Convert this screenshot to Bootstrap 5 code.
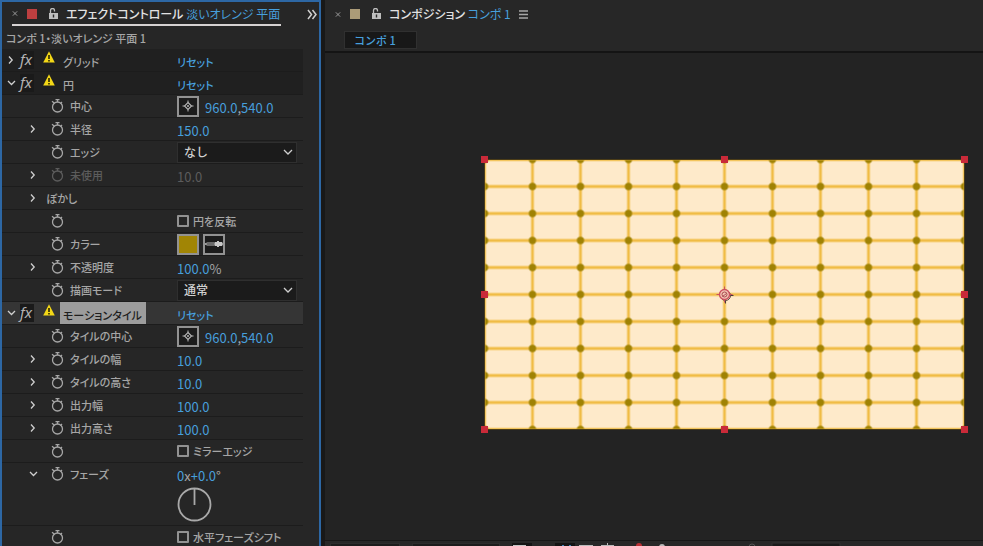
<!DOCTYPE html>
<html lang="ja">
<head>
<meta charset="utf-8">
<meta name="viewport" content="width=device-width, initial-scale=1">
<title>エフェクトコントロール</title>
<link href="https://cdn.jsdelivr.net/npm/bootstrap@5.3.0/dist/css/bootstrap.min.css" rel="stylesheet">
<style>
:root { --ink: #a6a6a6; --blue: #479fdc; --panel: #262626; --edge: #1c1c1c; }
body { background: #181818; color: var(--ink); font-family: "Noto Sans CJK JP", sans-serif; font-size: 12px; line-height: 16px; font-feature-settings: "palt"; }
svg { display: block; flex: none; overflow: visible; }
button, .lnk { background: none; border: 0; padding: 0; color: inherit; line-height: 16px; }
.lnk, .num { color: var(--blue); text-decoration: none; }
.lnk { font-weight: 500; }
.blue { color: var(--blue); }
.fx-panel { width: 321px; flex: none; background: var(--panel); border: 2px solid #2d67a4; border-bottom: 0; }
.strong-title { color: #e2e2e2; font-weight: 500; }
.fx-head { height: 24px; margin: 0 2px 0 10px; }
.fx-tab { border-bottom: 2px solid #d6d2d2; width: 269px; height: 24px; padding-top: 1px; }
.closer { width: 7px; margin-right: 8px; }
.chip { width: 10px; height: 10px; flex: none; }
.chip-red { background: #bd3f40; }
.chip-tan { background: #ab9b78; }
.crumb { height: 23px; padding: 4px 4px 0; font-size: 11px; font-weight: 500; }
.plist { margin-right: 16px; font-size: 11px; }
.prow { height: 23px; border-bottom: 1px solid var(--edge); }
.prow-fx { background: #202020; }
.prow-on { background: #353535; }
.prow-tall { height: 63px; }
.cell-name { width: 175px; flex: none; height: 22px; padding-left: 26px; font-weight: 500; }
.prow-fx .cell-name { padding-left: 4px; }
.twirl { width: 10px; height: 12px; margin-right: 12px; flex: none; color: #cfcfcf; }
.prow-fx .twirl { margin-right: 4px; }
.watch { width: 14px; height: 16px; margin-right: 6px; flex: none; }
.twirl-near { margin-right: 8px; }
.fxmark { width: 14px; margin-right: 9px; padding-bottom: 2px; line-height: 16px; font-family: "Noto Sans", sans-serif; font-style: italic; font-weight: 400; font-size: 15px; color: #b4b4b4; background: #1a1a1a; }
.warn { margin: 0 5px 7px 0; }
.fxname { padding: 3px 3px 0; height: 22px; line-height: 20px; }
.fxname-on { background: #9c9c9c; color: #1e1e1e; padding-right: 4px; }
.cell-val { height: 22px; }
.low { padding-top: 4px; }
.num { font-size: 13px; }
.plain { font-size: 13px; }
.cell-val > label { font-weight: 500; }
.off { color: #5c5c5c; }
.sq { width: 22px; height: 21px; border: 2px solid #929292; background: #1c1c1c; display: flex; align-items: center; justify-content: center; }
.aimer { margin-right: 6px; }
.sq-gold { background: #a18505; }
.pick { position: relative; width: 120px; }
.pick select { appearance: none; width: 100%; height: 21px; background: #1b1b1b; border: 1px solid #2f2f2f; color: #d0d0d0; padding: 0 6px; font-size: 12px; font-weight: 500; line-height: 18px; }
.pick svg { position: absolute; right: 4px; top: 7px; pointer-events: none; color: #cfcfcf; }
.tick { appearance: none; width: 12px; height: 12px; border: 2px solid #929292; border-radius: 1px; margin: 0 4px 0 0; flex: none; }
.tick:checked { background: #929292; }
.comp { margin-left: 4px; background: #232323; min-width: 0; }
.comp-head { height: 28px; padding-left: 10px; background: #272727; }
.comp-tabs { height: 25px; padding: 3px 0 0 19px; background: #272727; border-bottom: 2px solid #141414; }
.comp-tab { width: 73px; height: 18px; background: #181818; border: 1px solid #303030; padding-left: 9px; font-size: 11px; font-weight: 500; }
.stage { padding: 102px 0 0 155px; overflow: hidden; }
.foot { height: 6px; background: #272727; border-top: 1px solid #171717; padding: 2px 0 0 5px; overflow: hidden; gap: 12px; }
.slot { height: 8px; background: #1c1c1c; border: 1px solid #2c2c2c; flex: none; }
.slot-a { width: 70px; } .slot-b { width: 88px; }
</style>
<script src="https://cdn.jsdelivr.net/npm/bootstrap@5.3.0/dist/js/bootstrap.bundle.min.js"></script>
</head>
<body class="vh-100 overflow-hidden">
<svg width="0" height="0" class="position-absolute" aria-hidden="true">
  <defs>
    <symbol id="right" viewBox="0 0 10 12"><path d="M3 2.500 6.200 6 3 9.500" fill="none" stroke="currentColor" stroke-width="1.300"/></symbol>
    <symbol id="down" viewBox="0 0 10 12"><path d="M2 4 5.500 7.500 9 4" fill="none" stroke="currentColor" stroke-width="1.300"/></symbol>
    <symbol id="watch" viewBox="0 0 14 16"><g fill="none" stroke="currentColor" stroke-width="1.300"><circle cx="7.500" cy="9" r="5"/><path d="M5.500 1.600h4M7.500 1.600V4M2 3.200 4.500 5.300M10.500 5.500 12 4"/></g></symbol>
    <symbol id="lock" viewBox="0 0 9 12"><path d="M0 5h9v6H0zM3.800 6.500v3h1.400v-3z" fill="#bdbdbd" fill-rule="evenodd"/><path d="M1.500 5V2.500a2 2 0 0 1 4 0v1" fill="none" stroke="#bdbdbd" stroke-width="1.300"/></symbol>
    <symbol id="cross" viewBox="0 0 7 7"><path d="M1 1 6 6M6 1 1 6" stroke="#a0a0a0" stroke-width="1.100"/></symbol>
    <symbol id="warn" viewBox="0 0 12 12"><path d="M6 .3 11.800 11.500H.2z" fill="#f4d817"/><path d="M5.200 4h1.600v4H5.200zM5.200 9h1.600v1.500H5.200z" fill="#2b2600"/></symbol>
    <symbol id="aim" viewBox="0 0 12 12"><g fill="none" stroke="#b8b8b8"><path d="M6 2.500 9.500 6 6 9.500 2.500 6z" stroke-width="1.100"/><path d="M6 .5v2M6 9.500v2M.5 6h2M9.500 6h2"/></g><circle cx="6" cy="6" r="1" fill="#b8b8b8"/></symbol>
  </defs>
</svg>
<div class="d-flex h-100">
  <section class="fx-panel overflow-hidden" aria-label="エフェクトコントロール">
    <header class="fx-head d-flex justify-content-between align-items-center">
      <div class="fx-tab d-flex align-items-center">
        <button type="button" class="closer" aria-label="閉じる"><svg width="6" height="7"><use href="#cross"/></svg></button>
        <span class="chip chip-red me-2"></span>
        <svg width="9" height="12" class="ms-1 me-2"><use href="#lock"/></svg>
        <span class="strong-title text-nowrap">エフェクトコントロール <span class="blue fw-normal">淡いオレンジ 平面</span></span>
      </div>
      <button type="button" aria-label="その他のパネル"><svg width="10" height="9"><path d="M1 0 4.500 4.500 1 9M5.500 0 9 4.500 5.500 9" fill="none" stroke="#d0d0d0" stroke-width="1.500"/></svg></button>
    </header>
    <div class="crumb text-nowrap">コンポ 1・淡いオレンジ 平面 1</div>
    <div class="plist">
      <div class="prow prow-fx d-flex">
        <div class="cell-name d-flex align-items-center"><button type="button" class="twirl" aria-label="開く"><svg width="10" height="12"><use href="#right"/></svg></button><span class="fxmark">fx</span><svg class="warn" width="12" height="12"><use href="#warn"/></svg><span class="fxname">グリッド</span></div>
        <div class="cell-val low d-flex align-items-center"><a class="lnk" href="#">リセット</a></div>
      </div>
      <div class="prow prow-fx d-flex">
        <div class="cell-name d-flex align-items-center"><button type="button" class="twirl" aria-label="閉じる"><svg width="10" height="12"><use href="#down"/></svg></button><span class="fxmark">fx</span><svg class="warn" width="12" height="12"><use href="#warn"/></svg><span class="fxname">円</span></div>
        <div class="cell-val low d-flex align-items-center"><a class="lnk" href="#">リセット</a></div>
      </div>
      <div class="prow d-flex">
        <div class="cell-name d-flex align-items-center"><span class="twirl"></span><button type="button" class="watch" aria-label="中心のストップウォッチ"><svg width="14" height="16"><use href="#watch"/></svg></button>中心</div>
        <div class="cell-val d-flex align-items-center"><button type="button" class="sq aimer" aria-label="中心を指定"><svg width="12" height="12"><use href="#aim"/></svg></button><span class="low plain"><button type="button" class="num">960.0</button>,<button type="button" class="num">540.0</button></span></div>
      </div>
      <div class="prow d-flex">
        <div class="cell-name d-flex align-items-center"><button type="button" class="twirl" aria-label="開く"><svg width="10" height="12"><use href="#right"/></svg></button><button type="button" class="watch" aria-label="半径のストップウォッチ"><svg width="14" height="16"><use href="#watch"/></svg></button>半径</div>
        <div class="cell-val low d-flex align-items-center"><button type="button" class="num">150.0</button></div>
      </div>
      <div class="prow d-flex">
        <div class="cell-name d-flex align-items-center"><span class="twirl"></span><button type="button" class="watch" aria-label="エッジのストップウォッチ"><svg width="14" height="16"><use href="#watch"/></svg></button><label for="edge">エッジ</label></div>
        <div class="cell-val d-flex align-items-center"><div class="pick"><select id="edge"><option>なし</option></select><svg width="10" height="6"><path d="M1 1 5 5 9 1" fill="none" stroke="currentColor" stroke-width="1.300"/></svg></div></div>
      </div>
      <div class="prow d-flex">
        <div class="cell-name off d-flex align-items-center"><button type="button" class="twirl" aria-label="開く"><svg width="10" height="12"><use href="#right"/></svg></button><button type="button" class="watch off" disabled aria-label="未使用"><svg width="14" height="16"><use href="#watch"/></svg></button>未使用</div>
        <div class="cell-val low d-flex align-items-center"><button type="button" class="num off" disabled>10.0</button></div>
      </div>
      <div class="prow d-flex">
        <div class="cell-name d-flex align-items-center"><button type="button" class="twirl twirl-near" aria-label="開く"><svg width="10" height="12"><use href="#right"/></svg></button>ぼかし</div>
      </div>
      <div class="prow d-flex">
        <div class="cell-name d-flex align-items-center"><span class="twirl"></span><button type="button" class="watch" aria-label="円を反転のストップウォッチ"><svg width="14" height="16"><use href="#watch"/></svg></button></div>
        <div class="cell-val d-flex align-items-center"><input class="tick" type="checkbox" id="inv"><label for="inv">円を反転</label></div>
      </div>
      <div class="prow d-flex">
        <div class="cell-name d-flex align-items-center"><span class="twirl"></span><button type="button" class="watch" aria-label="カラーのストップウォッチ"><svg width="14" height="16"><use href="#watch"/></svg></button>カラー</div>
        <div class="cell-val d-flex align-items-center gap-1"><button type="button" class="sq sq-gold" aria-label="カラー"></button><button type="button" class="sq" aria-label="スポイト"><svg width="18" height="8"><path d="M0 4 2 3h8v2H2z" fill="none" stroke="#b8b8b8"/><path d="M10 2h2V1h2v1h3l1 2-1 2h-3v1h-2V6h-2z" fill="#c8c8c8"/></svg></button></div>
      </div>
      <div class="prow d-flex">
        <div class="cell-name d-flex align-items-center"><button type="button" class="twirl" aria-label="開く"><svg width="10" height="12"><use href="#right"/></svg></button><button type="button" class="watch" aria-label="不透明度のストップウォッチ"><svg width="14" height="16"><use href="#watch"/></svg></button>不透明度</div>
        <div class="cell-val low plain d-flex align-items-center"><button type="button" class="num">100.0</button>%</div>
      </div>
      <div class="prow d-flex">
        <div class="cell-name d-flex align-items-center"><span class="twirl"></span><button type="button" class="watch" aria-label="描画モードのストップウォッチ"><svg width="14" height="16"><use href="#watch"/></svg></button><label for="mode">描画モード</label></div>
        <div class="cell-val d-flex align-items-center"><div class="pick"><select id="mode"><option>通常</option></select><svg width="10" height="6"><path d="M1 1 5 5 9 1" fill="none" stroke="currentColor" stroke-width="1.300"/></svg></div></div>
      </div>
      <div class="prow prow-fx prow-on d-flex">
        <div class="cell-name d-flex align-items-center"><button type="button" class="twirl" aria-label="閉じる"><svg width="10" height="12"><use href="#down"/></svg></button><span class="fxmark">fx</span><svg class="warn" width="12" height="12"><use href="#warn"/></svg><span class="fxname fxname-on">モーションタイル</span></div>
        <div class="cell-val low d-flex align-items-center"><a class="lnk" href="#">リセット</a></div>
      </div>
      <div class="prow d-flex">
        <div class="cell-name d-flex align-items-center"><span class="twirl"></span><button type="button" class="watch" aria-label="タイルの中心のストップウォッチ"><svg width="14" height="16"><use href="#watch"/></svg></button>タイルの中心</div>
        <div class="cell-val d-flex align-items-center"><button type="button" class="sq aimer" aria-label="タイルの中心を指定"><svg width="12" height="12"><use href="#aim"/></svg></button><span class="low plain"><button type="button" class="num">960.0</button>,<button type="button" class="num">540.0</button></span></div>
      </div>
      <div class="prow d-flex">
        <div class="cell-name d-flex align-items-center"><button type="button" class="twirl" aria-label="開く"><svg width="10" height="12"><use href="#right"/></svg></button><button type="button" class="watch" aria-label="タイルの幅のストップウォッチ"><svg width="14" height="16"><use href="#watch"/></svg></button>タイルの幅</div>
        <div class="cell-val low d-flex align-items-center"><button type="button" class="num">10.0</button></div>
      </div>
      <div class="prow d-flex">
        <div class="cell-name d-flex align-items-center"><button type="button" class="twirl" aria-label="開く"><svg width="10" height="12"><use href="#right"/></svg></button><button type="button" class="watch" aria-label="タイルの高さのストップウォッチ"><svg width="14" height="16"><use href="#watch"/></svg></button>タイルの高さ</div>
        <div class="cell-val low d-flex align-items-center"><button type="button" class="num">10.0</button></div>
      </div>
      <div class="prow d-flex">
        <div class="cell-name d-flex align-items-center"><button type="button" class="twirl" aria-label="開く"><svg width="10" height="12"><use href="#right"/></svg></button><button type="button" class="watch" aria-label="出力幅のストップウォッチ"><svg width="14" height="16"><use href="#watch"/></svg></button>出力幅</div>
        <div class="cell-val low d-flex align-items-center"><button type="button" class="num">100.0</button></div>
      </div>
      <div class="prow d-flex">
        <div class="cell-name d-flex align-items-center"><button type="button" class="twirl" aria-label="開く"><svg width="10" height="12"><use href="#right"/></svg></button><button type="button" class="watch" aria-label="出力高さのストップウォッチ"><svg width="14" height="16"><use href="#watch"/></svg></button>出力高さ</div>
        <div class="cell-val low d-flex align-items-center"><button type="button" class="num">100.0</button></div>
      </div>
      <div class="prow d-flex">
        <div class="cell-name d-flex align-items-center"><span class="twirl"></span><button type="button" class="watch" aria-label="ミラーエッジのストップウォッチ"><svg width="14" height="16"><use href="#watch"/></svg></button></div>
        <div class="cell-val d-flex align-items-center"><input class="tick" type="checkbox" id="mir"><label for="mir">ミラーエッジ</label></div>
      </div>
      <div class="prow prow-tall d-flex">
        <div class="cell-name d-flex align-items-center"><button type="button" class="twirl" aria-label="閉じる"><svg width="10" height="12"><use href="#down"/></svg></button><button type="button" class="watch" aria-label="フェーズのストップウォッチ"><svg width="14" height="16"><use href="#watch"/></svg></button>フェーズ</div>
        <div>
          <div class="cell-val low plain d-flex align-items-center"><button type="button" class="num">0</button>x<button type="button" class="num">+0.0</button>°</div>
          <svg width="36" height="36" class="mt-1"><circle cx="17.500" cy="15.500" r="16" fill="none" stroke="#a9a9a9" stroke-width="1.800"/><path d="M17.500 0v16" stroke="#a9a9a9" stroke-width="1.800"/></svg>
        </div>
      </div>
      <div class="prow d-flex">
        <div class="cell-name d-flex align-items-center"><span class="twirl"></span><button type="button" class="watch" aria-label="水平フェーズシフトのストップウォッチ"><svg width="14" height="16"><use href="#watch"/></svg></button></div>
        <div class="cell-val d-flex align-items-center"><input class="tick" type="checkbox" id="hps"><label for="hps">水平フェーズシフト</label></div>
      </div>
    </div>
  </section>
  <main class="comp flex-grow-1 d-flex flex-column overflow-hidden">
    <header class="comp-head d-flex align-items-center">
      <button type="button" class="closer" aria-label="閉じる"><svg width="6" height="7"><use href="#cross"/></svg></button>
      <span class="chip chip-tan me-2"></span>
      <svg width="9" height="12" class="ms-1 me-2"><use href="#lock"/></svg>
      <span class="strong-title me-2 text-nowrap">コンポジション <span class="blue fw-normal">コンポ 1</span></span>
      <button type="button" aria-label="メニュー"><svg width="9" height="9"><path d="M0 1h9M0 4.500h9M0 8h9" stroke="#a8a8a8" stroke-width="1.300"/></svg></button>
    </header>
    <nav class="comp-tabs"><button type="button" class="comp-tab blue d-flex align-items-center">コンポ 1</button></nav>
    <div class="stage flex-grow-1">
      <svg width="490" height="280" viewBox="0 0 490 280" role="img" aria-label="コンポジションのプレビュー">
        <defs>
          <pattern id="tile" x="4.500" y="4.500" width="48" height="27" patternUnits="userSpaceOnUse">
            <rect width="48" height="27" fill="#feeaca"/>
            <path d="M0 0H48M0 27H48M0 0V27M48 0V27" stroke="#f0bc45" stroke-width="2.800"/>
            <g fill="#9f8204"><circle r="3.700"/><circle cx="48" r="3.700"/><circle cy="27" r="3.700"/><circle cx="48" cy="27" r="3.700"/></g>
          </pattern>
        </defs>
        <rect x="4.500" y="4.500" width="480" height="270" fill="url(#tile)" stroke="#151208" stroke-width="1"/>
        <path d="M5 274V5H484V274z" fill="none" stroke="#f0bc45" stroke-opacity=".5"/>
        <g fill="#c92a39"><path d="M1 1h7v7H1zM241 1h7v7h-7zM481 1h7v7h-7zM1 136h7v7H1zM481 136h7v7h-7zM1 271h7v7H1zM241 271h7v7h-7zM481 271h7v7h-7z"/></g>
        <g transform="translate(244.500 139.500)" fill="none"><path d="M1 9V6M6 1h3" stroke="#4a3a3a" stroke-width="1"/><circle cx="1" cy="1" r="5" stroke="#594141" stroke-width="1"/><circle r="5" fill="#f3c3b2" stroke="#cc5060" stroke-width="1.300"/><path d="M0-8V-5M0 5V8M-8 0H-5M5 0H8" stroke="#cc5060"/><circle r="2.500" stroke="#a94e54"/><path d="M-2 2 2-1" stroke="#a94e54"/></g>
      </svg>
    </div>
    <footer class="foot d-flex">
      <span class="slot slot-a"></span><span class="slot slot-b"></span>
      <svg width="430" height="8"><path d="M0 0h20v4H0z" fill="#141414"/><path d="M1 2h13v2H1z" fill="#c4c4c4"/><path d="M43 0h20v4H43z" fill="#131313"/><path d="M50 2h2v2h-2zM57 2h2v2h-2z" fill="#3e86bd"/><path d="M67 2h14v2H67zM89 2h13v2H89zM95 0h1v2h-1z" fill="#bababa"/><circle cx="127" cy="3" r="3" fill="#b82f33"/><circle cx="150" cy="4" r="3" fill="#bababa"/><circle cx="240" cy="4" r="3" fill="none" stroke="#555"/><path d="M260 4V0h68v4" fill="#1a1a1a" stroke="#303030"/></svg>
    </footer>
  </main>
</div>
</body>
</html>
